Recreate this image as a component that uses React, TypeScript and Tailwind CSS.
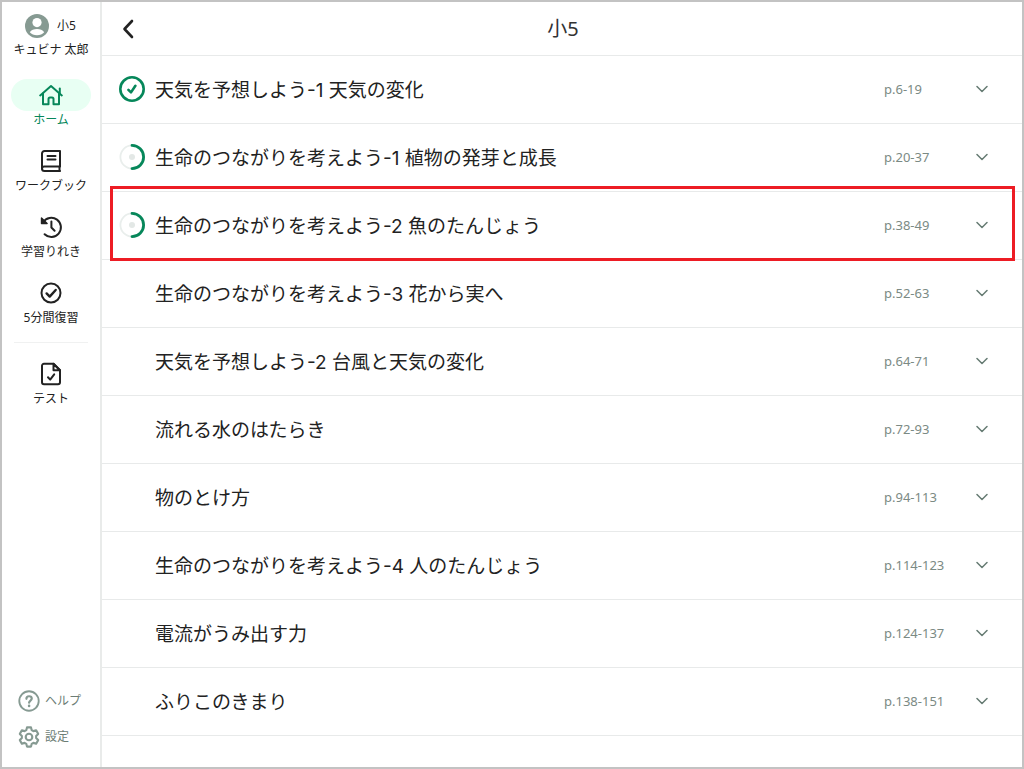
import type { ReactNode } from "react";
import clsx from "clsx";

type Progress = "done" | "half" | "none";

interface Unit {
  title: string;
  pages: string;
  progress: Progress;
  highlighted?: boolean;
}

const units: Unit[] = [
  { title: "天気を予想しよう-1 天気の変化", pages: "p.6-19", progress: "done" },
  { title: "生命のつながりを考えよう-1 植物の発芽と成長", pages: "p.20-37", progress: "half" },
  { title: "生命のつながりを考えよう-2 魚のたんじょう", pages: "p.38-49", progress: "half", highlighted: true },
  { title: "生命のつながりを考えよう-3 花から実へ", pages: "p.52-63", progress: "none" },
  { title: "天気を予想しよう-2 台風と天気の変化", pages: "p.64-71", progress: "none" },
  { title: "流れる水のはたらき", pages: "p.72-93", progress: "none" },
  { title: "物のとけ方", pages: "p.94-113", progress: "none" },
  { title: "生命のつながりを考えよう-4 人のたんじょう", pages: "p.114-123", progress: "none" },
  { title: "電流がうみ出す力", pages: "p.124-137", progress: "none" },
  { title: "ふりこのきまり", pages: "p.138-151", progress: "none" },
];

const Icon = ({ children, size = 24 }: { children: ReactNode; size?: number }) => (
  <svg
    width={size}
    height={size}
    viewBox="0 0 24 24"
    fill="none"
    stroke="currentColor"
    strokeWidth={2}
    strokeLinecap="round"
    strokeLinejoin="round"
    aria-hidden="true"
    className="shrink-0"
  >
    {children}
  </svg>
);

const HomeIcon = () => (
  <Icon>
    <path d="M1.2 12.4 12 3l10.8 9.4" />
    <path d="M20.8 10.5V5.5" />
    <path d="M4 10.5v10.7h5.5V16a1.5 1.5 0 0 1 1.5-1.5h2a1.5 1.5 0 0 1 1.5 1.5v5.2H20V10.5" />
  </Icon>
);

const BookIcon = () => (
  <Icon>
    <path d="M21 17.5V2H5.5A2.5 2.5 0 0 0 3 4.5v15A2.5 2.5 0 0 0 5.5 22H21" />
    <path d="M21 17.5H5.3A2.3 2.3 0 0 0 3 19.8M20.5 17.5V22" />
    <path d="M8.5 7h8M8.5 10.5h8" />
  </Icon>
);

const HistoryIcon = () => (
  <Icon>
    <path d="M4.2 7.2A9.6 9.6 0 1 1 5.6 19.2" />
    <path d="M2.5 3v5.6h5.6z" fill="currentColor" strokeWidth={1.4} />
    <path d="M12.4 6.5v6l3.2 3.2" />
  </Icon>
);

const ReviewIcon = () => (
  <Icon>
    <circle cx="12" cy="12" r="9.5" />
    <path d="m7.6 12.4 3.1 3.2 6-6.6" strokeWidth={2.4} />
  </Icon>
);

const TestIcon = () => (
  <Icon>
    <path d="M14.5 1.8H5a2 2 0 0 0-2 2v16.4a2 2 0 0 0 2 2h14a2 2 0 0 0 2-2V8.3z" />
    <path d="M14.5 1.8v6.5H21z" />
    <path d="m9 15.2 2.2 2.4 4-5.2" />
  </Icon>
);

const HelpIcon = () => (
  <Icon size={22}>
    <circle cx="12" cy="12" r="10.6" />
    <path d="M9.2 9.6c0-1.8 1.2-2.8 2.9-2.8s2.9 1 2.9 2.6c0 2.1-2.9 2.1-2.9 4.4" strokeWidth={2.4} />
    <path d="M12.1 17.3v.1" strokeWidth={2.8} />
  </Icon>
);

const SettingsIcon = () => (
  <Icon size={22}>
    <path
      strokeWidth={2.3}
      d="M9.8 1.5h4.4l.7 3 1.9 1.1 3-.9L22 8.6l-2.2 2.2v2.4l2.2 2.2-2.2 3.9-3-.9-1.9 1.1-.7 3H9.8l-.7-3-1.9-1.1-3 .9L2 15.4l2.200-2.200v-2.400L2 8.600l2.200-3.900 3 .9 1.900-1.100z"
    />
    <circle cx="12" cy="12" r="3.6" strokeWidth={2.3} />
  </Icon>
);

const AvatarIcon = () => (
  <svg width="24" height="24" viewBox="0 0 24 24" aria-hidden="true" className="shrink-0">
    <circle cx="12" cy="12" r="12" fill="#869a92" />
    <circle cx="12" cy="8.6" r="4.6" fill="#fff" />
    <path d="M4.8 18.3c1.4-2.3 4.2-3.3 7.2-3.3s5.8 1 7.2 3.3c-1.6 1.9-4.2 2.9-7.2 2.9s-5.6-1-7.2-2.9z" fill="#fff" />
  </svg>
);

const ProgressIcon = ({ progress }: { progress: Progress }) => {
  if (progress === "none") return <span className="size-[26px] shrink-0" />;
  return (
    <svg
      width="26"
      height="26"
      viewBox="0 0 26 26"
      fill="none"
      role="img"
      aria-label={progress === "done" ? "完了" : "学習中"}
      className="shrink-0"
    >
      {progress === "done" ? (
        <g stroke="#06875a">
          <circle cx="13" cy="13" r="11.7" strokeWidth="2.6" />
          <path d="m9.4 13.8 2.6 2.6 4.4-6.6" strokeWidth="2.6" strokeLinecap="round" strokeLinejoin="round" />
        </g>
      ) : (
        <>
          <circle cx="13" cy="13" r="11.6" stroke="#e9eeec" strokeWidth="1.8" />
          <circle cx="13" cy="13" r="3" fill="#e3e8e6" />
          <path d="M13 1.4a11.6 11.6 0 0 1 0 23.2" stroke="#06875a" strokeWidth="2.8" strokeLinecap="round" />
        </>
      )}
    </svg>
  );
};

const NavItem = ({ icon, label, active }: { icon: ReactNode; label: string; active?: boolean }) => (
  <a
    href="#"
    aria-current={active ? "page" : undefined}
    className={clsx("flex w-full flex-col items-center", active ? "text-[#06875a]" : "text-[#222]")}
  >
    <span className={clsx("flex h-8 w-20 items-center justify-center rounded-full", active && "bg-[#e8fff3]")}>
      {icon}
    </span>
    <span className="text-xs leading-[18px] whitespace-nowrap">{label}</span>
  </a>
);

const Sidebar = () => (
  <aside className="flex w-[100px] shrink-0 flex-col border-r-2 border-[#e9ebea] text-xs text-[#222]">
    <div className="flex flex-col pt-3">
      <div className="flex items-center gap-2 pl-[23px]">
        <AvatarIcon />
        <span>小5</span>
      </div>
      <p className="mt-0.5 text-center leading-5 whitespace-nowrap">キュビナ 太郎</p>
    </div>
    <nav className="mt-[19px] flex flex-col items-center">
      <div className="flex w-full flex-col gap-4">
        <NavItem icon={<HomeIcon />} label="ホーム" active />
        <NavItem icon={<BookIcon />} label="ワークブック" />
        <NavItem icon={<HistoryIcon />} label="学習りれき" />
        <NavItem icon={<ReviewIcon />} label="5分間復習" />
      </div>
      <hr className="my-[15px] w-[74px] border-[#f0f1f1]" />
      <NavItem icon={<TestIcon />} label="テスト" />
    </nav>
    <div className="mt-auto flex flex-col gap-[14px] pb-[19px] pl-4 text-[#6c7d75]">
      <a href="#" className="flex items-center gap-[5px]">
        <span className="text-[#869a92]">
          <HelpIcon />
        </span>
        ヘルプ
      </a>
      <a href="#" className="flex items-center gap-[5px]">
        <span className="text-[#869a92]">
          <SettingsIcon />
        </span>
        設定
      </a>
    </div>
  </aside>
);

const UnitRow = ({ unit }: { unit: Unit }) => (
  <li className="relative border-b border-[#e8eaea]">
    <button type="button" className="flex h-[67px] w-full items-center pr-[34px] pb-px pl-[17px] text-left">
      <ProgressIcon progress={unit.progress} />
      <span className="ml-[10px] flex-1 pt-[3px] font-['Inter','Noto_Sans_CJK_JP',sans-serif] text-[19px] leading-7 text-[#222]">
        {unit.title}
      </span>
      <span className="w-[92px] text-[13px] leading-5 text-[#7b8a84]">{unit.pages}</span>
      <svg width="12" height="12" viewBox="0 0 12 12" fill="none" aria-hidden="true">
        <path d="m1 3.5 5 5 5-5" stroke="#667b73" strokeWidth="1.5" strokeLinecap="round" strokeLinejoin="round" />
      </svg>
    </button>
    {unit.highlighted && (
      <div className="pointer-events-none absolute -top-[6px] right-[7px] -bottom-[2px] left-2 z-10 border-3 border-[#ed1c24]" />
    )}
  </li>
);

const App = () => (
  <div className="flex min-h-screen border-2 border-[#c3c3c3] bg-white font-['Noto_Sans','Noto_Sans_CJK_JP',sans-serif]">
    <Sidebar />
    <main className="min-w-0 flex-1">
      <header className="grid h-[54px] grid-cols-[38px_1fr_36px] items-center border-b border-[#e8eaea] px-2">
        <button type="button" aria-label="戻る" className="flex justify-center">
          <svg width="20" height="20" viewBox="0 0 20 20" fill="none" aria-hidden="true">
            <path d="M13 2 5.500 10l7.500 8" stroke="#222" strokeWidth="2.6" strokeLinecap="round" strokeLinejoin="round" />
          </svg>
        </button>
        <h1 className="text-center text-xl text-[#333]">小5</h1>
      </header>
      <ul>
        {units.map((unit) => (
          <UnitRow key={unit.title} unit={unit} />
        ))}
      </ul>
    </main>
  </div>
);

export default App;
